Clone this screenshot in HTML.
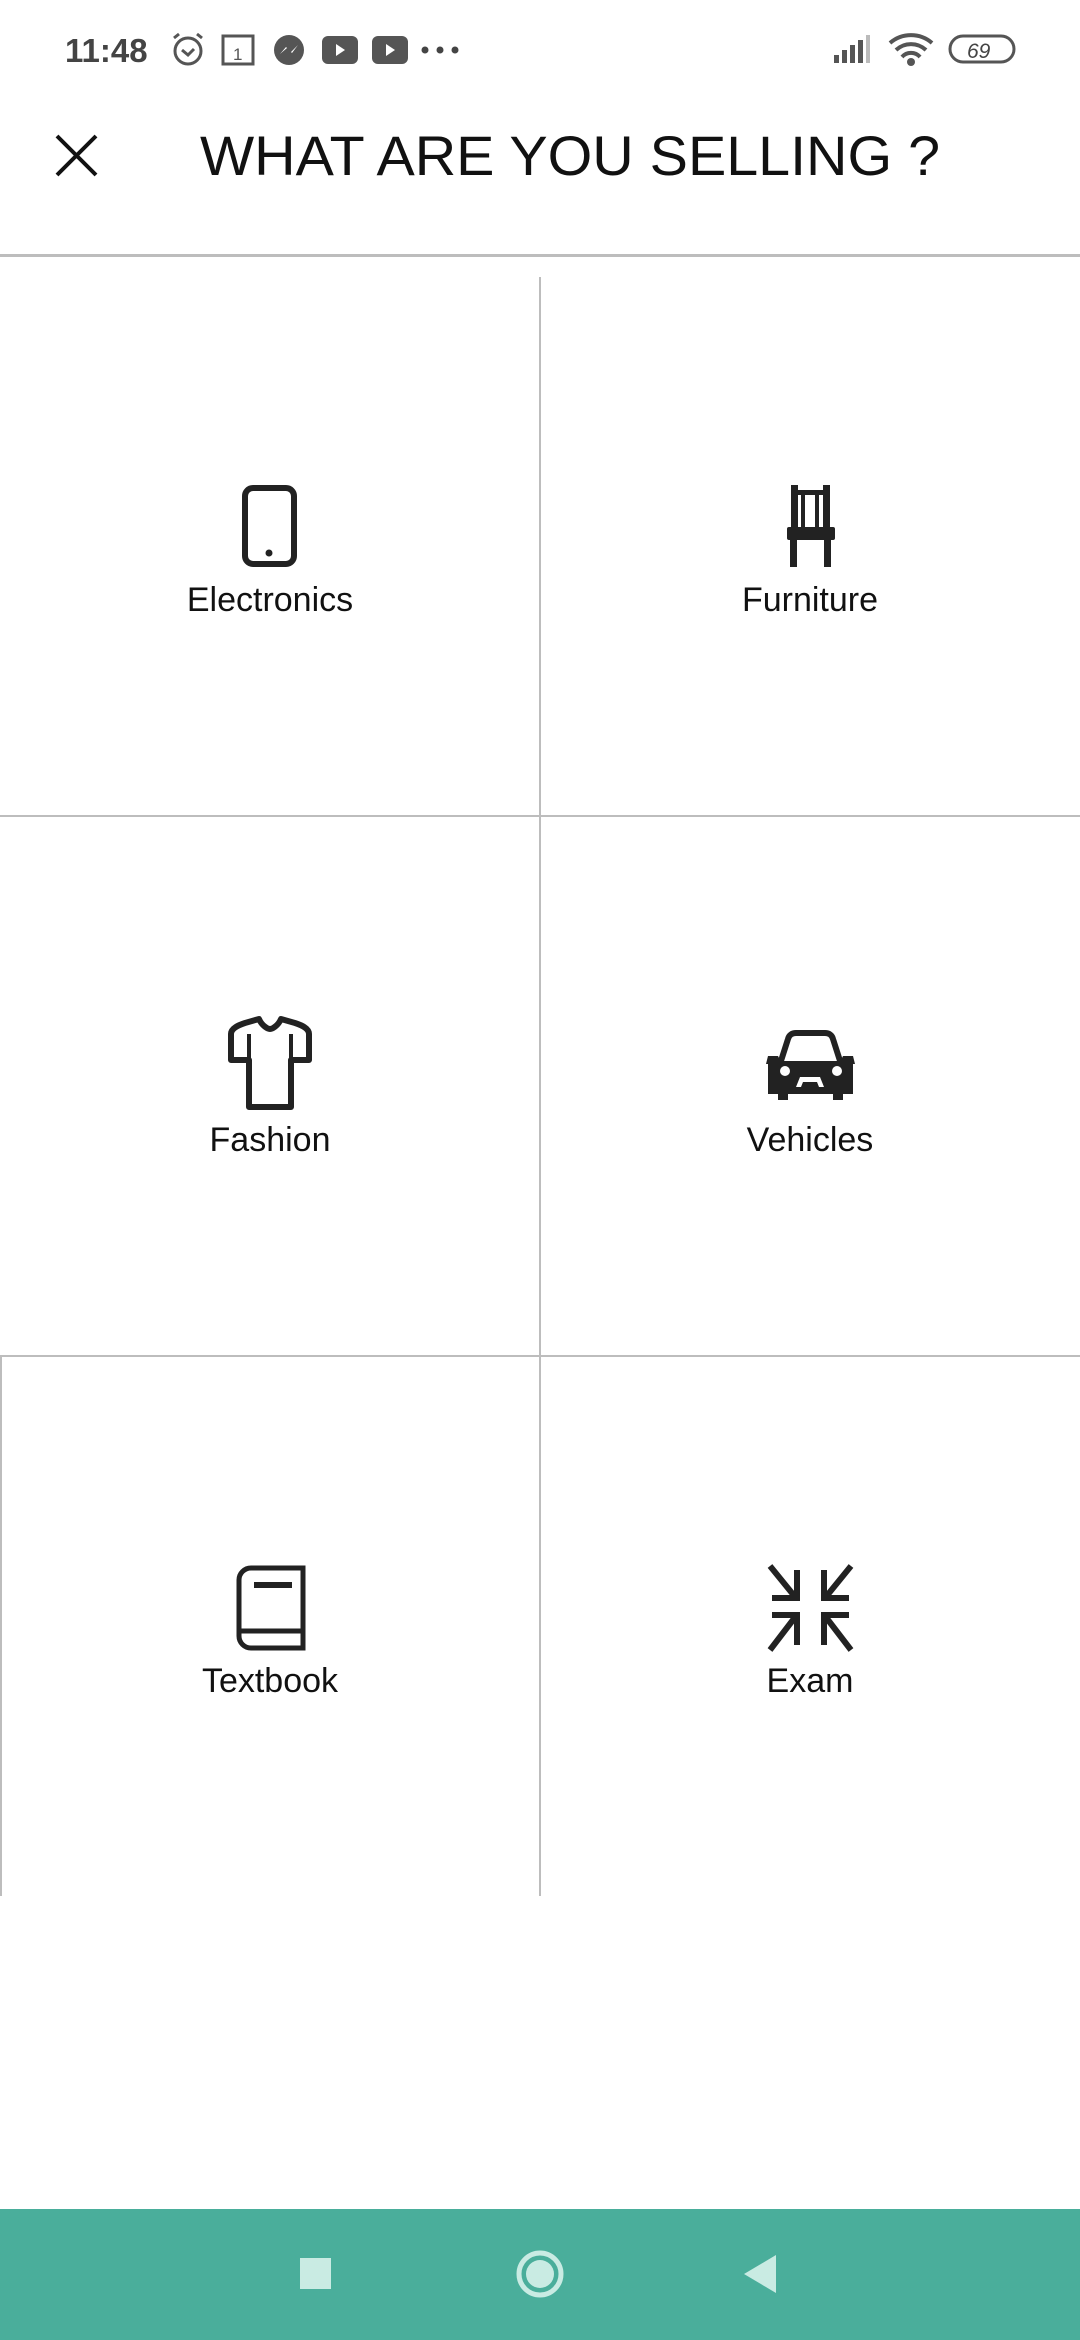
<!DOCTYPE html>
<html><head><meta charset="utf-8"><style>
html,body{margin:0;padding:0;background:#fff;}
body{width:1080px;height:2340px;position:relative;overflow:hidden;font-family:"Liberation Sans",sans-serif;}
.abs{position:absolute;}
.lbl{position:absolute;width:540px;text-align:center;font-size:34px;color:#111;line-height:40px;}
</style></head><body>
<svg class="abs" style="left:0;top:0" width="1080" height="2340" viewBox="0 0 1080 2340">
<!-- status bar -->
<text x="65" y="62" font-family="Liberation Sans" font-weight="bold" font-size="33" fill="#444">11:48</text>
<g fill="none" stroke="#555" stroke-width="3">
<circle cx="188" cy="51" r="13"/><path d="M182 50l6 5 6-6"/><path d="M174 38l5-4M202 38l-5-4"/>
<rect x="223" y="36" width="30" height="28"/>
</g>
<text x="233" y="60" font-size="17" fill="#555" font-family="Liberation Sans">1</text>
<circle cx="289" cy="50" r="15" fill="#555"/><path d="M280 54l6-7 5 5 7-7-6 8-5-5z" fill="#fff"/>
<rect x="322" y="36" width="36" height="28" rx="6" fill="#555"/><path d="M336 44v12l9-6z" fill="#fff"/>
<rect x="372" y="36" width="36" height="28" rx="6" fill="#555"/><path d="M386 44v12l9-6z" fill="#fff"/>
<circle cx="425" cy="50" r="3.5" fill="#444"/><circle cx="440" cy="50" r="3.5" fill="#444"/><circle cx="455" cy="50" r="3.5" fill="#444"/>
<g fill="#555"><rect x="834" y="55" width="5" height="8"/><rect x="842" y="50" width="5" height="13"/><rect x="850" y="45" width="5" height="18"/><rect x="858" y="40" width="5" height="23"/><rect x="866" y="35" width="4" height="28" fill="#bbb"/></g>
<g fill="none" stroke="#555" stroke-width="4"><path d="M890 43a32 32 0 0 1 42 0"/><path d="M896 50a22 22 0 0 1 30 0"/><path d="M902 57a12 12 0 0 1 18 0"/></g>
<circle cx="911" cy="62" r="4" fill="#555"/>
<rect x="950" y="36" width="64" height="26" rx="13" fill="none" stroke="#555" stroke-width="3"/>
<text x="967" y="58" font-size="21" fill="#444" font-style="italic" font-family="Liberation Sans">69</text>
<!-- header -->
<path d="M57 136L96 175M96 136L57 175" stroke="#111" stroke-width="4"/>
<text x="200" y="175" font-family="Liberation Sans" font-size="56" fill="#111" textLength="740" lengthAdjust="spacingAndGlyphs">WHAT ARE YOU SELLING ?</text>
<rect x="0" y="254" width="1080" height="3" fill="#bdbdbd"/>
<!-- grid -->
<g fill="#bdbdbd">
<rect x="539" y="277" width="2" height="1619"/>
<rect x="0" y="815" width="1080" height="2"/>
<rect x="0" y="1355" width="1080" height="2"/>
<rect x="0" y="1356" width="2" height="540"/>
</g>
<!-- phone -->
<rect x="245" y="488" width="49" height="76" rx="8" fill="none" stroke="#222" stroke-width="6"/>
<circle cx="269" cy="553" r="3.5" fill="#222"/>
<!-- chair -->
<g fill="#222">
<rect x="791" y="485" width="7" height="45"/><rect x="823" y="485" width="7" height="45"/>
<rect x="791" y="490" width="39" height="5"/><rect x="801" y="495" width="4" height="33"/><rect x="815" y="495" width="4" height="33"/>
<rect x="787" y="527" width="48" height="13" rx="2"/>
<rect x="790" y="538" width="7" height="29"/><rect x="824" y="538" width="7" height="29"/>
</g>
<!-- shirt -->
<path d="M249 1107V1060h-18v-26c0-6 8-9 14-11l14-4c3 7 9 10 11 10s8-3 11-10l14 4c6 2 14 5 14 11v26h-18v47z" fill="none" stroke="#222" stroke-width="6" stroke-linejoin="round"/>
<path d="M249 1062v-28M291 1062v-28" stroke="#222" stroke-width="4"/>
<!-- car -->
<path d="M780 1064l8-25c1-4 4-6 8-6h29c4 0 7 2 8 6l8 25z" fill="none" stroke="#222" stroke-width="6" stroke-linejoin="round"/>
<path d="M768 1056h10l4 8h-16zM853 1056h-10l-4 8h16z" fill="#222"/>
<path d="M768 1062h85v32h-10v6h-10v-6h-45v6h-10v-6h-10z" fill="#222"/>
<circle cx="785" cy="1071" r="5" fill="#fff"/><circle cx="837" cy="1071" r="5" fill="#fff"/>
<path d="M796 1087l4-10h20l4 10h-5l-2-5h-14l-2 5z" fill="#fff"/>
<!-- book -->
<path d="M303 1568h-52a12 12 0 0 0 -12 12v56a12 12 0 0 0 12 12h52z" fill="none" stroke="#222" stroke-width="5"/>
<path d="M241 1631h60" stroke="#222" stroke-width="5"/>
<rect x="254" y="1582" width="38" height="6" fill="#222"/>
<!-- exam -->
<g stroke="#222" stroke-width="6" fill="none">
<path d="M770 1566l26 32M772 1598h25v-28"/>
<path d="M851 1566l-26 32M849 1598h-25v-28"/>
<path d="M770 1650l26-34M772 1615h25v30"/>
<path d="M851 1650l-26-34M849 1615h-25v30"/>
</g>
<!-- nav -->
<rect x="0" y="2209" width="1080" height="131" fill="#4aae9b"/>
<rect x="300" y="2258" width="31" height="31" fill="#c9ebe3"/>
<circle cx="540" cy="2274" r="21" fill="none" stroke="#c9ebe3" stroke-width="5"/>
<circle cx="540" cy="2274" r="14" fill="#c9ebe3"/>
<path d="M776 2255v38l-32-19z" fill="#c9ebe3"/>
</svg>
<div class="lbl" style="left:0;top:580px">Electronics</div>
<div class="lbl" style="left:540px;top:580px">Furniture</div>
<div class="lbl" style="left:0;top:1120px">Fashion</div>
<div class="lbl" style="left:540px;top:1120px">Vehicles</div>
<div class="lbl" style="left:0;top:1661px">Textbook</div>
<div class="lbl" style="left:540px;top:1661px">Exam</div>
</body></html>
